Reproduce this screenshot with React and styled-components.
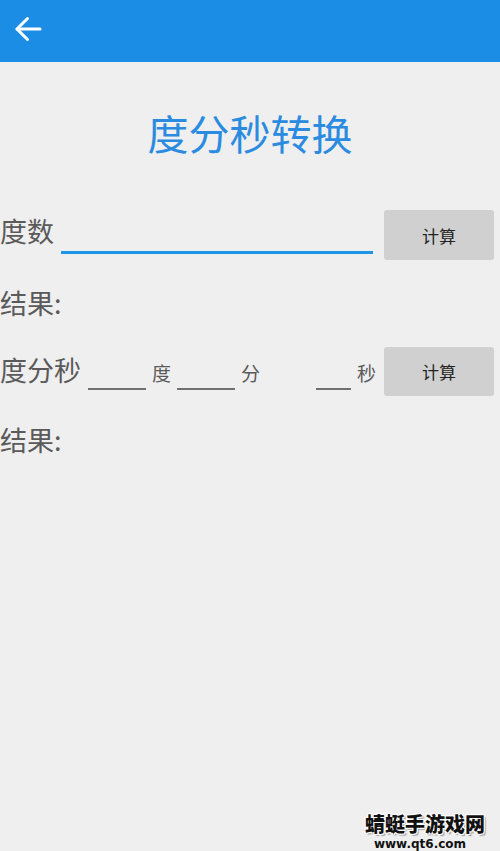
import styled, { createGlobalStyle } from 'styled-components'

const GlobalStyle = createGlobalStyle`
  html, body {
    margin: 0;
    padding: 0;
    background: #efefef;
  }
  body {
    font-family: "Noto Sans CJK SC", "Noto Sans", sans-serif;
  }
`

const Page = styled.div`
  position: relative;
  width: 500px;
  height: 851px;
  overflow: hidden;
  background: #efefef;
`

const TopBar = styled.header`
  height: 62px;
  background: #1b8de5;
  display: flex;
  align-items: center;
  padding-left: 14px;
  box-sizing: border-box;
`

const BackButton = styled.button`
  border: 0;
  background: none;
  padding: 0;
  width: 28px;
  height: 28px;
  display: flex;
  align-items: center;
  justify-content: center;
  margin-top: -4px;
  cursor: pointer;
`

const Title = styled.h1`
  margin: 46px 0 0;
  font-size: 41px;
  line-height: 48px;
  font-weight: 400;
  text-align: center;
  color: #2a8be0;
`

const Row = styled.div`
  display: flex;
  align-items: flex-start;
  margin-top: ${(p) => p.$top}px;
`

const Label = styled.span`
  font-size: 27px;
  line-height: 27px;
  color: #5a5a5a;
  margin-top: ${(p) => p.$offset || 0}px;
  white-space: nowrap;
`

const LineInput = styled.input`
  width: 312px;
  height: 44px;
  margin-left: 7px;
  border: 0;
  border-bottom: 3px solid #1e96e8;
  background: transparent;
  outline: none;
  box-sizing: border-box;
  font-size: 20px;
  font-family: inherit;
`

const SmallInput = styled.input`
  width: ${(p) => p.$w}px;
  height: 43px;
  margin-left: ${(p) => p.$ml}px;
  border: 0;
  border-bottom: 2px solid #707070;
  background: transparent;
  outline: none;
  box-sizing: border-box;
  font-size: 16px;
  font-family: inherit;
`

const Unit = styled.span`
  font-size: 19px;
  line-height: 19px;
  color: #5a5a5a;
  margin-left: 6px;
  margin-top: 16px;
`

const CalcButton = styled.button`
  width: 110px;
  height: ${(p) => p.$h}px;
  margin-left: auto;
  margin-right: 6px;
  border: 0;
  border-radius: 3px;
  background: #d0d0d0;
  color: #222;
  font-family: inherit;
  font-size: 17px;
  cursor: pointer;
`

const Result = styled.div`
  font-size: 27px;
  line-height: 27px;
  color: #5a5a5a;
  margin-top: ${(p) => p.$top}px;
`

const Watermark = styled.div`
  position: absolute;
  right: 15px;
  bottom: 0;
  display: flex;
  flex-direction: column;
  align-items: center;
  gap: 4px;
`

const MarkName = styled.span`
  font-size: 20px;
  line-height: 20px;
  font-weight: 900;
  color: #111;
  text-shadow:
    -1px -1px 0 #fff, 1px -1px 0 #fff, -1px 1px 0 #fff, 1px 1px 0 #fff,
    2px 2px 1px #999;
`

const MarkUrl = styled.span`
  font-family: "DejaVu Sans", sans-serif;
  font-size: 12px;
  line-height: 13px;
  font-weight: 700;
  color: #111;
  margin-right: 10px;
`

export default function App() {
  return (
    <Page>
      <GlobalStyle />
      <TopBar>
        <BackButton aria-label="back">
          <svg width="28" height="28" viewBox="0 0 28 28" fill="none" stroke="#fff" strokeWidth="3" strokeLinecap="round" strokeLinejoin="round">
            <path d="M3 14h23" />
            <path d="M13.5 3.5L3 14l10.5 10.5" />
          </svg>
        </BackButton>
      </TopBar>

      <Title>度分秒转换</Title>

      <Row $top={54}>
        <Label $offset={7}>度数</Label>
        <LineInput />
        <CalcButton $h={50}>计算</CalcButton>
      </Row>
      <Result $top={29}>结果:</Result>

      <Row $top={31}>
        <Label $offset={9}>度分秒</Label>
        <SmallInput $w={58} $ml={7} />
        <Unit>度</Unit>
        <SmallInput $w={58} $ml={6} />
        <Unit>分</Unit>
        <SmallInput $w={35} $ml={56} />
        <Unit>秒</Unit>
        <CalcButton $h={49}>计算</CalcButton>
      </Row>
      <Result $top={30}>结果:</Result>

      <Watermark>
        <MarkName>蜻蜓手游戏网</MarkName>
        <MarkUrl>www.qt6.com</MarkUrl>
      </Watermark>
    </Page>
  )
}
